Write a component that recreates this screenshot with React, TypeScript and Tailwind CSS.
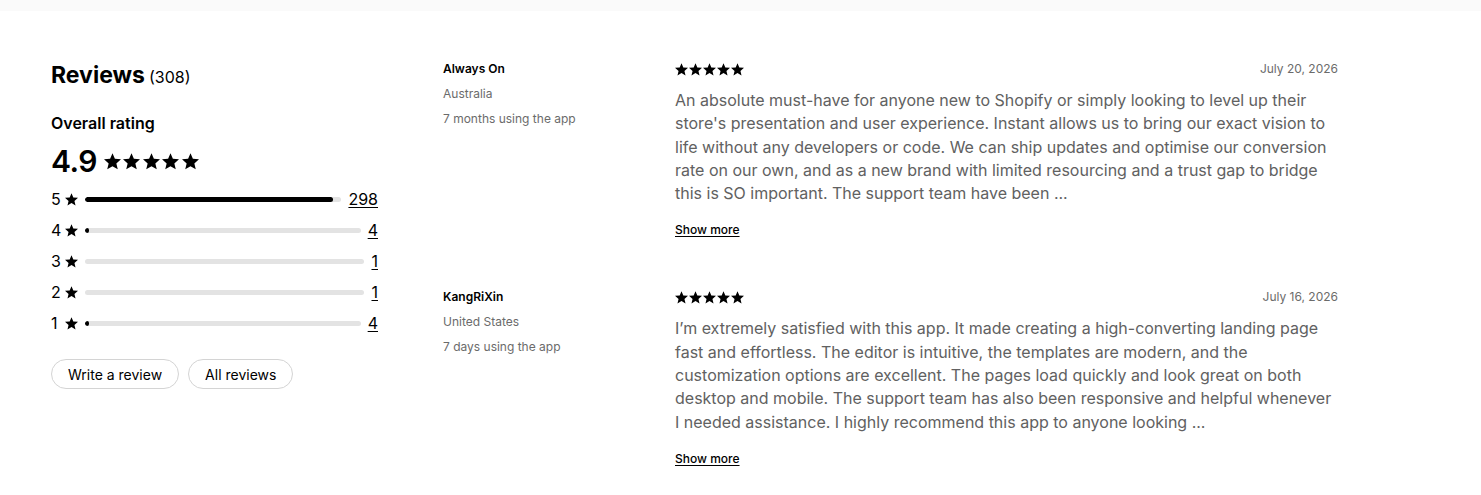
import React from 'react';

const Star: React.FC<{ className?: string }> = ({ className }) => (
  <svg viewBox="2 2 20 19.5" className={className} fill="currentColor" aria-hidden="true">
    <path d="M12 17.27L18.18 21l-1.64-7.03L22 9.24l-7.19-.61L12 2 9.19 8.63 2 9.24l5.46 4.73L5.82 21z" />
  </svg>
);

const Stars: React.FC<{ size: string; gap: string }> = ({ size, gap }) => (
  <div className={`flex items-center ${gap}`}>
    {[0, 1, 2, 3, 4].map((i) => (
      <Star key={i} className={size} />
    ))}
  </div>
);

const breakdown = [
  { stars: 5, count: 298, pct: 96.8 },
  { stars: 4, count: 4, pct: 1.3 },
  { stars: 3, count: 1, pct: 0 },
  { stars: 2, count: 1, pct: 0 },
  { stars: 1, count: 4, pct: 1.3 },
];

const reviews = [
  {
    name: 'Always On',
    country: 'Australia',
    usage: '7 months using the app',
    date: 'July 20, 2026',
    text: "An absolute must-have for anyone new to Shopify or simply looking to level up their store's presentation and user experience. Instant allows us to bring our exact vision to life without any developers or code. We can ship updates and optimise our conversion rate on our own, and as a new brand with limited resourcing and a trust gap to bridge this is SO important. The support team have been ...",
  },
  {
    name: 'KangRiXin',
    country: 'United States',
    usage: '7 days using the app',
    date: 'July 16, 2026',
    text: 'I\u2019m extremely satisfied with this app. It made creating a high-converting landing page fast and effortless. The editor is intuitive, the templates are modern, and the customization options are excellent. The pages load quickly and look great on both desktop and mobile. The support team has also been responsive and helpful whenever I needed assistance. I highly recommend this app to anyone looking ...',
  },
];

export default function App() {
  return (
    <div className="min-h-[495px] bg-white text-black font-['Inter','Noto_Sans',sans-serif]">
      <div className="h-[11px] bg-[#fafafa]" />
      <div className="flex pl-[51px] pt-[51px]">
        {/* summary */}
        <div className="w-[327px] shrink-0">
          <h2 className="flex items-baseline gap-[4px] leading-[26px]">
            <span className="text-[23px] font-bold">Reviews</span>
            <span className="text-[16px]">(308)</span>
          </h2>
          <div className="mt-[23px] text-[16px] font-semibold leading-5">Overall rating</div>
          <div className="mt-[9px] flex items-center gap-[7px]">
            <span className="text-[30px] font-semibold leading-[38px] tracking-[-0.5px]">4.9</span>
            <Stars size="w-[17px] h-[17px]" gap="gap-[2.5px]" />
          </div>
          <div className="mt-[9px] flex flex-col gap-[11px]">
            {breakdown.map((row) => (
              <div key={row.stars} className="flex items-center h-5">
                <span className="w-[10px] text-[16px] leading-5">{row.stars}</span>
                <Star className="ml-[4px] w-[13px] h-[13px]" />
                <div className="ml-[7px] flex-1 h-[5px] rounded-full bg-[#e3e3e3] overflow-hidden">
                  <div
                    className="h-full rounded-full bg-black"
                    style={{ width: row.pct > 0 ? `max(${row.pct}%, 2px)` : 0 }}
                  />
                </div>
                <a href="#" className="ml-[7px] text-[16px] leading-5 underline underline-offset-2 decoration-1">
                  {row.count}
                </a>
              </div>
            ))}
          </div>
          <div className="mt-[26px] flex gap-[9px]">
            <button className="h-[30px] px-4 rounded-full border border-[#d4d4d4] text-[14px]">Write a review</button>
            <button className="h-[30px] px-4 rounded-full border border-[#d4d4d4] text-[14px]">All reviews</button>
          </div>
        </div>

        {/* reviews */}
        <div className="ml-[65px] flex flex-col gap-[49px] -mt-[1px]">
          {reviews.map((r) => (
            <div key={r.name} className="flex">
              <div className="w-[232px] shrink-0 text-[12px] leading-4">
                <div className="font-semibold">{r.name}</div>
                <div className="mt-[9px] text-[#6b6b6b]">{r.country}</div>
                <div className="mt-[9px] text-[#6b6b6b]">{r.usage}</div>
              </div>
              <div className="w-[663px]">
                <div className="flex items-center justify-between h-4">
                  <Stars size="w-[13px] h-[13px]" gap="gap-[1px]" />
                  <span className="text-[12px] text-[#6b6b6b]">{r.date}</span>
                </div>
                <p className="mt-[12px] text-[16px] leading-[23.3px] text-[#616161]">{r.text}</p>
                <a href="#" className="mt-[17px] inline-block text-[12px] font-medium leading-4 underline underline-offset-2 decoration-1">
                  Show more
                </a>
              </div>
            </div>
          ))}
        </div>
      </div>
    </div>
  );
}
